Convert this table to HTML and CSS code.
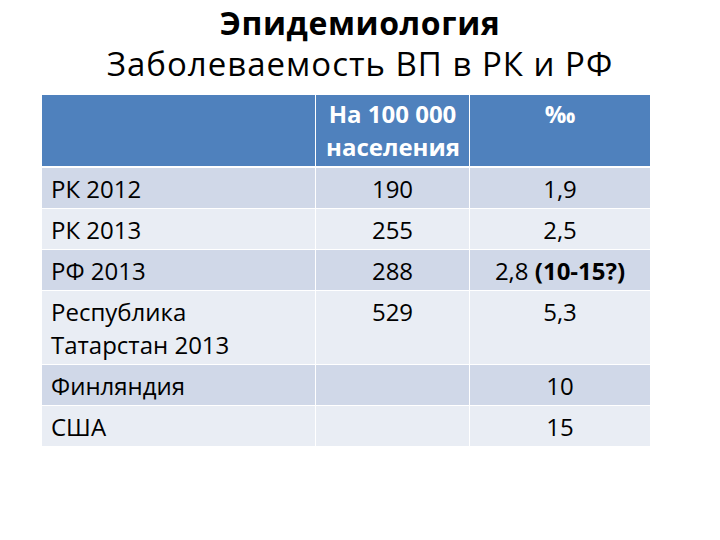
FILE: index.html
```html
<!DOCTYPE html>
<html lang="ru">
<head>
<meta charset="utf-8">
<title>Эпидемиология</title>
<link rel="stylesheet" href="styles.css">
</head>
<body>
<div class="slide">
  <h1 class="title">
    <span class="title-main">Эпидемиология</span>
    <span class="title-sub">Заболеваемость ВП в РК и РФ</span>
  </h1>
  <table class="data">
    <colgroup>
      <col class="c1"><col class="c2"><col class="c3">
    </colgroup>
    <thead>
      <tr>
        <th></th>
        <th>На 100 000 населения</th>
        <th>‰</th>
      </tr>
    </thead>
    <tbody>
      <tr class="odd"><td>РК 2012</td><td class="num">190</td><td class="num">1,9</td></tr>
      <tr class="even"><td>РК 2013</td><td class="num">255</td><td class="num">2,5</td></tr>
      <tr class="odd"><td>РФ 2013</td><td class="num">288</td><td class="num">2,8 <b>(10-15?)</b></td></tr>
      <tr class="even"><td>Республика Татарстан 2013</td><td class="num">529</td><td class="num">5,3</td></tr>
      <tr class="odd"><td>Финляндия</td><td class="num"></td><td class="num">10</td></tr>
      <tr class="even"><td>США</td><td class="num"></td><td class="num">15</td></tr>
    </tbody>
  </table>
</div>
</body>
</html>
```
FILE: styles.css
```css
html, body {
  margin: 0;
  padding: 0;
  background: #ffffff;
}
.slide {
  width: 720px;
  height: 540px;
  font-family: "Open Sans", "Noto Sans", sans-serif;
  color: #000000;
  padding-top: 3px;
  box-sizing: border-box;
}
.title {
  margin: 0;
  font-weight: normal;
  text-align: center;
}
.title-main,
.title-sub {
  display: block;
}
.title-main {
  font-weight: bold;
  font-size: 32px;
  line-height: 40px;
  letter-spacing: 0.6px;
}
.title-sub {
  font-size: 33px;
  line-height: 42px;
  letter-spacing: 1px;
}
.data {
  margin: 10px 0 0 42px;
  width: 608px;
  border-collapse: separate;
  border-spacing: 0;
  table-layout: fixed;
  font-size: 24px;
  line-height: 33px;
}
.c1 { width: 274px; }
.c2 { width: 154px; }
.c3 { width: 180px; }
.data th {
  background: #4f81bd;
  color: #ffffff;
  font-weight: bold;
  padding: 2px 10px 3px;
  vertical-align: top;
  border-right: 1px solid #ffffff;
  border-bottom: 2px solid #ffffff;
}
.data td {
  padding: 4px 9px 3px;
  vertical-align: top;
  text-align: left;
  border-right: 1px solid #ffffff;
  border-bottom: 1px solid #ffffff;
}
.data th:last-child,
.data td:last-child {
  border-right: none;
}
.data td.num {
  text-align: center;
}
.odd td { background: #d0d8e8; }
.even td { background: #e9edf4; }
```
